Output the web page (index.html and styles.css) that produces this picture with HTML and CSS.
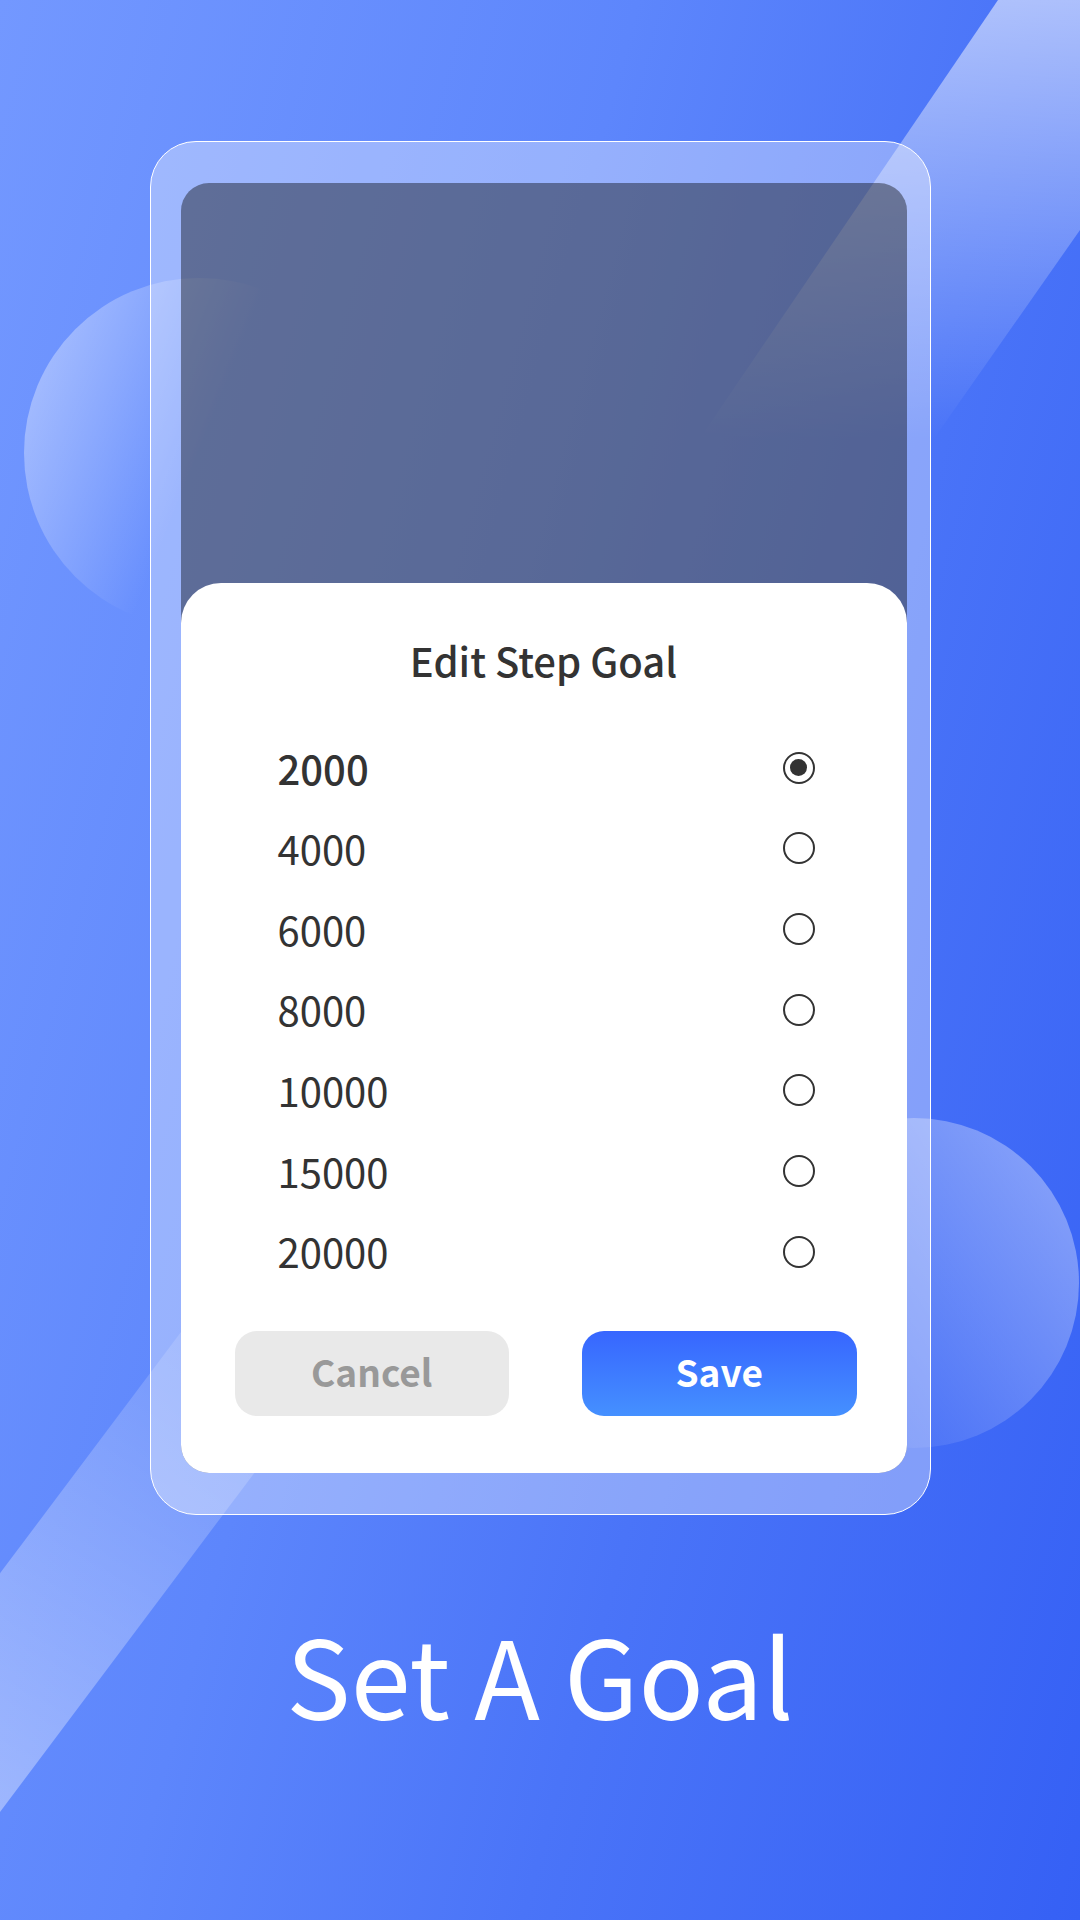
FILE: index.html
```html
<!DOCTYPE html>
<html lang="en">
<head>
<meta charset="utf-8">
<title>Set A Goal</title>
<link rel="stylesheet" href="styles.css">
</head>
<body>
<div class="page">
  <svg class="bg-art" width="1080" height="1920" viewBox="0 0 1080 1920" aria-hidden="true">
    <defs>
      <linearGradient id="stripeTop" x1="0" y1="0" x2="0" y2="440" gradientUnits="userSpaceOnUse">
        <stop offset="0" stop-color="#fff" stop-opacity="0.55"/>
        <stop offset="1" stop-color="#fff" stop-opacity="0"/>
      </linearGradient>
      <linearGradient id="stripeBottom" x1="-120" y1="1900" x2="420" y2="1180" gradientUnits="userSpaceOnUse">
        <stop offset="0" stop-color="#fff" stop-opacity="0.45"/>
        <stop offset="1" stop-color="#fff" stop-opacity="0"/>
      </linearGradient>
      <linearGradient id="circleLeft" x1="0" y1="0.3" x2="0.5" y2="0.5">
        <stop offset="0" stop-color="#fff" stop-opacity="0.38"/>
        <stop offset="1" stop-color="#fff" stop-opacity="0"/>
      </linearGradient>
      <linearGradient id="circleRight" x1="1" y1="0.2" x2="0" y2="0.9">
        <stop offset="0" stop-color="#fff" stop-opacity="0.38"/>
        <stop offset="0.85" stop-color="#fff" stop-opacity="0"/>
      </linearGradient>
    </defs>
    <polygon points="998,0 1241,0 891,500 658,500" fill="url(#stripeTop)"/>
    <polygon points="355,1100 534,1100 -81,1920 -260,1920" fill="url(#stripeBottom)"/>
    <circle cx="199" cy="453" r="175" fill="url(#circleLeft)"/>
    <circle cx="914" cy="1283" r="165" fill="url(#circleRight)"/>
  </svg>

  <div class="phone">
    <div class="screen">
      <div class="screen-dim"></div>
      <div class="sheet">
        <h1 class="sheet-title">Edit Step Goal</h1>
        <ul class="options">
          <li class="option option-selected"><span class="option-label">2000</span><span class="radio radio-on"></span></li>
          <li class="option"><span class="option-label">4000</span><span class="radio"></span></li>
          <li class="option"><span class="option-label">6000</span><span class="radio"></span></li>
          <li class="option"><span class="option-label">8000</span><span class="radio"></span></li>
          <li class="option"><span class="option-label">10000</span><span class="radio"></span></li>
          <li class="option"><span class="option-label">15000</span><span class="radio"></span></li>
          <li class="option"><span class="option-label">20000</span><span class="radio"></span></li>
        </ul>
        <div class="actions">
          <button class="btn btn-cancel">Cancel</button>
          <button class="btn btn-save">Save</button>
        </div>
      </div>
    </div>
  </div>

  <h2 class="caption">Set A Goal</h2>
</div>
</body>
</html>
```

FILE: styles.css
```css
html, body {
  margin: 0;
  padding: 0;
}

body {
  font-family: "Noto Sans CJK SC", "Noto Sans", sans-serif;
}

.page {
  position: relative;
  width: 1080px;
  height: 1920px;
  overflow: hidden;
  background: linear-gradient(105deg, #7398ff 0%, #5d86fc 40%, #4a74f8 65%, #3560f5 100%);
  display: flex;
  flex-direction: column;
}

.bg-art {
  position: absolute;
  left: 0;
  top: 0;
}

.phone {
  position: relative;
  box-sizing: border-box;
  width: 781px;
  height: 1374px;
  margin: 141px 0 0 150px;
  border: 1.5px solid #ffffff;
  border-radius: 46px;
  background: rgba(255, 255, 255, 0.35);
  padding: 40.5px 23.5px 40.5px 29.5px;
}

.screen {
  height: 1290px;
  border-radius: 28px;
  overflow: hidden;
  display: flex;
  flex-direction: column;
  background: rgba(0, 0, 0, 0.4);
}

.screen-dim {
  height: 400px;
  flex: none;
}

.sheet {
  flex: 1;
  background: #ffffff;
  border-radius: 40px 40px 0 0;
  padding-top: 48px;
  display: flex;
  flex-direction: column;
}

.sheet-title {
  margin: 0;
  font-size: 40px;
  line-height: 58px;
  font-weight: 500;
  color: #333333;
  text-align: center;
}

.options {
  list-style: none;
  margin: 39px 0 0;
  padding: 0;
}

.option {
  height: 80.67px;
  display: flex;
  align-items: center;
  justify-content: space-between;
  padding: 0 92px 0 97px;
}

.option-label {
  font-size: 40px;
  line-height: 80.67px;
  color: #333333;
  font-weight: 400;
}

.option-selected .option-label {
  font-weight: 500;
}

.radio {
  box-sizing: border-box;
  width: 32px;
  height: 32px;
  border: 2.8px solid #333333;
  border-radius: 50%;
  display: flex;
  align-items: center;
  justify-content: center;
}

.radio-on::after {
  content: "";
  width: 17px;
  height: 17px;
  border-radius: 50%;
  background: #333333;
}

.actions {
  margin-top: 39px;
  display: flex;
  gap: 73px;
  padding: 0 50px 0 54px;
}

.btn {
  flex: 1;
  height: 85px;
  border: none;
  border-radius: 22px;
  font-family: "Noto Sans CJK SC", "Noto Sans", sans-serif;
  font-size: 37px;
  font-weight: 700;
  padding: 0 0 6px;
}

.btn-cancel {
  background: #e9e9e9;
  color: #999999;
}

.btn-save {
  background: linear-gradient(180deg, #3766ff 0%, #4590ff 100%);
  color: #ffffff;
}

.caption {
  position: relative;
  margin: 93px 0 0;
  font-size: 108px;
  line-height: 131px;
  font-weight: 400;
  color: #ffffff;
  text-align: center;
}
```
